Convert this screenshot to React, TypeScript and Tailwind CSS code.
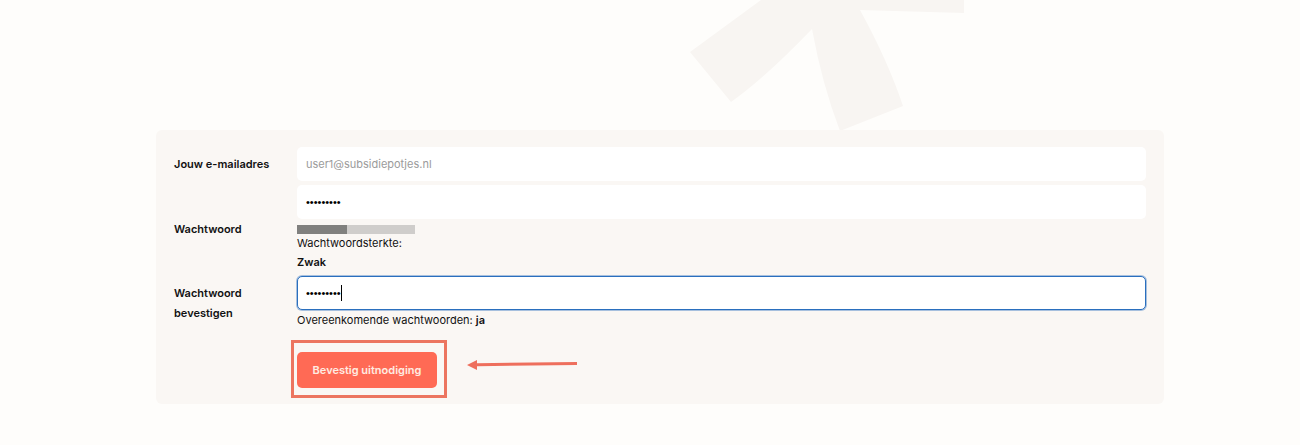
import { useState } from "react";

const labelClass = "text-[11px] leading-5 font-semibold text-[#111111]";
const inputClass = "block h-[34px] w-full rounded-[5px] bg-white outline-none";
const passwordClass = "font-['Liberation_Sans',sans-serif] text-[11px] text-black";
const rowClass = "grid grid-cols-[99px_minmax(0,1fr)] items-center gap-x-6";

export default function App() {
  const [email, setEmail] = useState("user1@subsidiepotjes.nl");
  const [password, setPassword] = useState("potjes123");
  const [confirmation, setConfirmation] = useState("potjes123");

  return (
    <main className="relative min-h-screen overflow-hidden bg-[#fefdfb] pt-[130px] pr-[136px] pb-10 pl-[156px] font-['Inter',sans-serif]">
      <svg
        className="pointer-events-none absolute top-0 left-[690px] h-[131px] w-[274px]"
        viewBox="0 0 274 131"
        aria-hidden="true"
      >
        <path
          d="M71 0 L0 52 L41 102 Q75 78 122 29 Q132 84 150 131 L213 106 Q198 61 170 10 L274 13 V0 Z"
          fill="#f8f5f2"
        />
      </svg>

      <form
        className="relative flex flex-col rounded-md bg-[#faf7f4] pt-[17px] pr-[18px] pb-4 pl-[18px]"
        onSubmit={(event) => event.preventDefault()}
      >
        <div className={rowClass}>
          <label htmlFor="email" className={labelClass}>
            Jouw e-mailadres
          </label>
          <input
            id="email"
            type="email"
            value={email}
            onChange={(event) => setEmail(event.target.value)}
            className={`${inputClass} px-[9px] text-[11px] text-[#9b9b9b]`}
          />
        </div>

        <div className={`${rowClass} mt-1`}>
          <label htmlFor="password" className={labelClass}>
            Wachtwoord
          </label>
          <div>
            <input
              id="password"
              type="password"
              value={password}
              onChange={(event) => setPassword(event.target.value)}
              className={`${inputClass} ${passwordClass} px-[9px]`}
            />
            <div className="mt-[6px] h-[9px] w-[118px] bg-[#cfcdcb]">
              <div className="h-full w-[50px] bg-[#80807e]" />
            </div>
            <p className="text-[11px] leading-[19px] text-[#111111]">Wachtwoordsterkte:</p>
            <p className="text-[11px] leading-[19px] font-semibold text-[#111111]">Zwak</p>
          </div>
        </div>

        <div className={`${rowClass} mt-1`}>
          <label htmlFor="confirmation" className={labelClass}>
            Wachtwoord bevestigen
          </label>
          <div>
            <div className="relative">
              <input
                id="confirmation"
                type="password"
                value={confirmation}
                onChange={(event) => setConfirmation(event.target.value)}
                className={`${inputClass} ${passwordClass} border border-[#2a6fbe] px-2 caret-transparent ring-1 ring-[#2a6fbe]/40`}
              />
              <span className="absolute top-[9px] left-11 h-4 w-px bg-black" aria-hidden="true" />
            </div>
            <p className="text-[11px] leading-5 text-[#111111]">
              Overeenkomende wachtwoorden: <strong className="font-semibold">ja</strong>
            </p>
          </div>
        </div>

        <div className="mt-[22px] flex items-center pl-[123px]">
          <div className="relative">
            <button
              type="submit"
              className="h-9 min-w-[140px] rounded-[5px] bg-[#ff6a55] px-[15px] text-[11px] font-semibold text-[#ffece2]"
            >
              Bevestig uitnodiging
            </button>
            <div
              className="pointer-events-none absolute -top-3 -right-[10px] -bottom-[10px] -left-[6px] border-[3px] border-[#ec7560]"
              aria-hidden="true"
            />
          </div>
          <svg className="mb-3 ml-[30px] h-3 w-[110px]" viewBox="0 0 110 12" aria-hidden="true">
            <path d="M0 7 L10 2 V5.2 L110 4 V7 L10 8.2 V12 Z" fill="#ee6f5d" />
          </svg>
        </div>
      </form>
    </main>
  );
}
